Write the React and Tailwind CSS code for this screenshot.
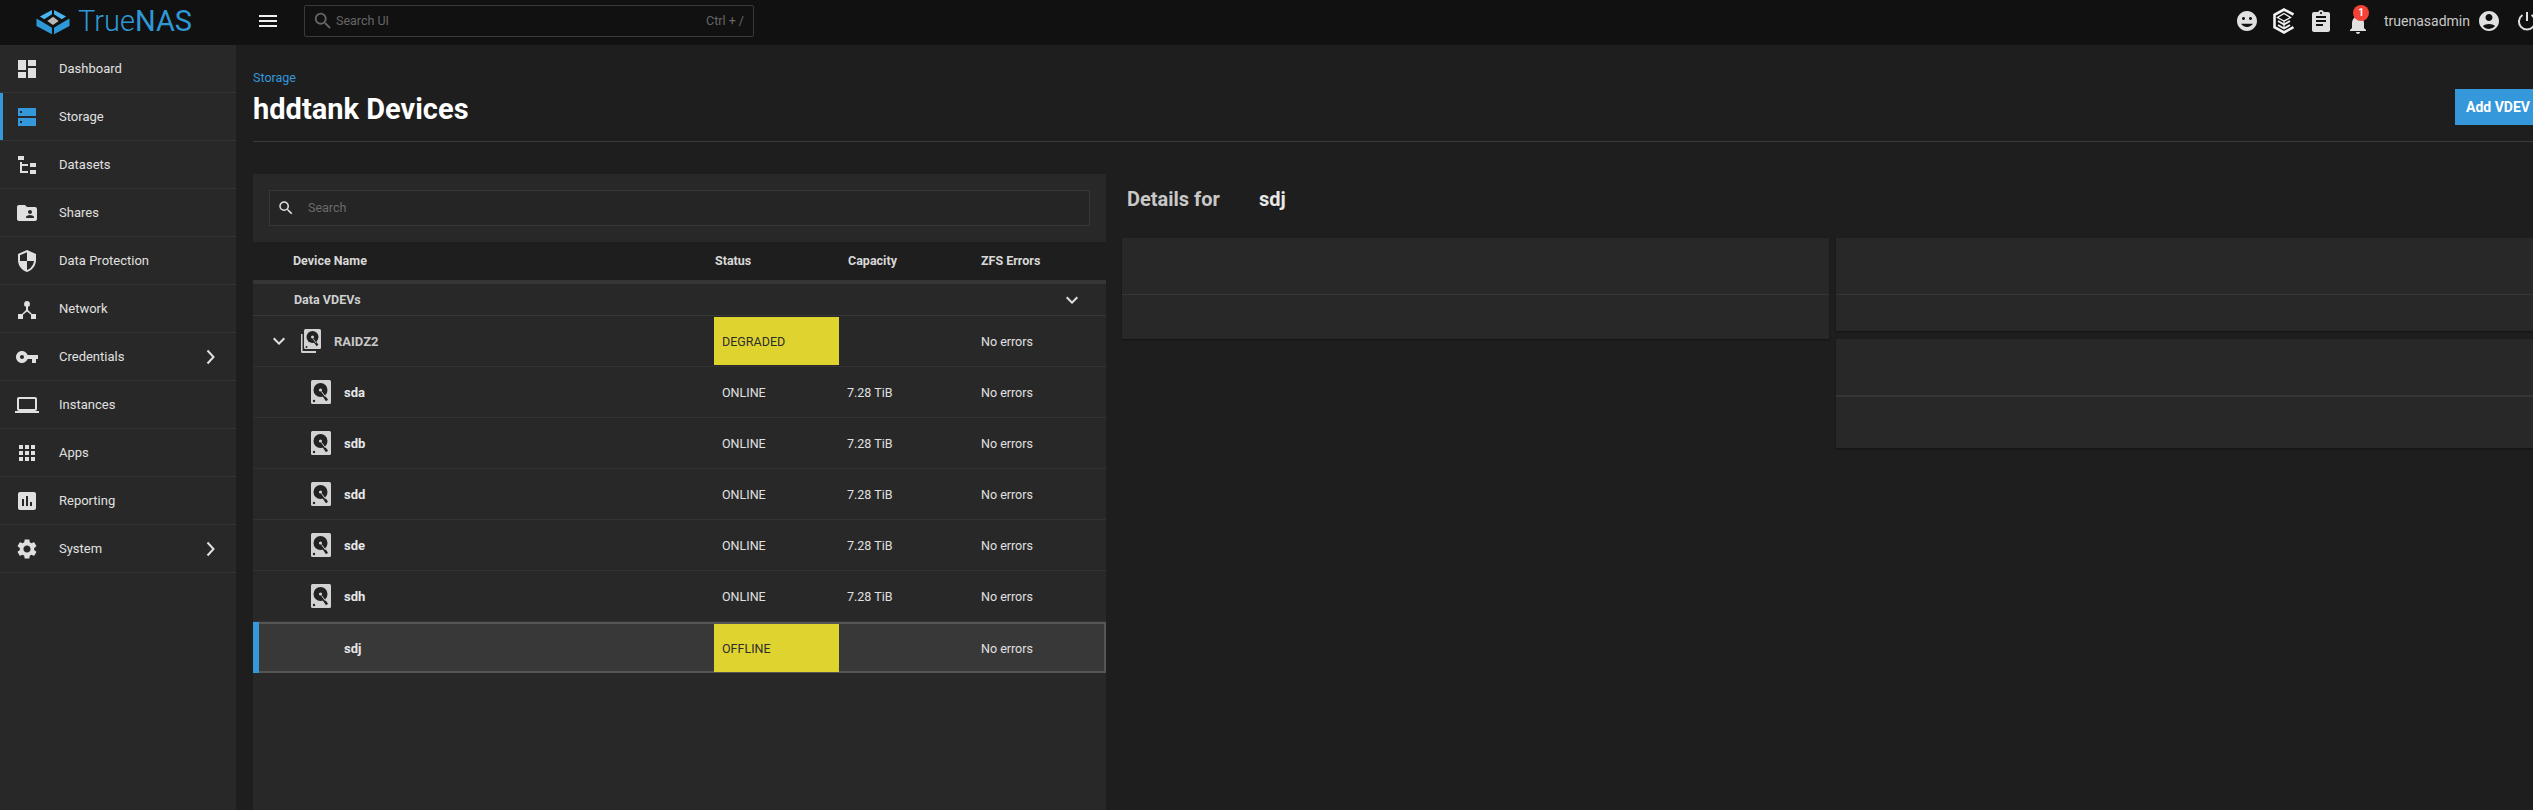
import React from "react";

function MdIcon({ d, className = "text-[#e0e0e0]", size = 24, evenodd = false }) {
  return (
    <svg width={size} height={size} viewBox="0 0 24 24" fill="currentColor" className={`shrink-0 ${className}`}>
      <path d={d} fillRule={evenodd ? "evenodd" : "nonzero"} />
    </svg>
  );
}

const ICONS = {
  dashboard: "M3 13h8V3H3v10zm0 8h8v-6H3v6zm10 0h8V11h-8v10zm0-18v6h8V3h-8z",
  datasets: "M3,3H9V7H3V3M15,10H21V14H15V10M15,17H21V21H15V17M13,13H7V18H13V20H7L5,20V9H7V11H13V13Z",
  shares: "M20 6h-8l-2-2H4c-1.1 0-1.99.9-1.99 2L2 18c0 1.1.9 2 2 2h16c1.1 0 2-.9 2-2V8c0-1.1-.9-2-2-2zm-5 3c1.1 0 2 .9 2 2s-.9 2-2 2-2-.9-2-2 .9-2 2-2zm4 8h-8v-1c0-1.33 2.67-2 4-2s4 .67 4 2v1z",
  shield: "M12 1L3 5v6c0 5.55 3.84 10.74 9 12 5.16-1.26 9-6.45 9-12V5l-9-4zm0 10.99h7c-.53 4.12-3.28 7.79-7 8.94V12H5V6.3l7-3.11v8.8z",
  network: "M12 4a3 3 0 0 1 1 5.83V13l4 4h4v5h-5v-4.200L12 14.500 8 17.800V22H3v-5h4l4-4V9.830A3 3 0 0 1 12 4z",
  key: "M12.65 10C11.83 7.67 9.61 6 7 6c-3.31 0-6 2.69-6 6s2.69 6 6 6c2.61 0 4.83-1.67 5.65-4H17v4h4v-4h2v-4H12.65zM7 14c-1.1 0-2-.9-2-2s.9-2 2-2 2 .9 2 2-.9 2-2 2z",
  laptop: "M20 18c1.1 0 1.99-.9 1.99-2L22 6c0-1.1-.9-2-2-2H4c-1.1 0-2 .9-2 2v10c0 1.1.9 2 2 2H0v2h24v-2h-4zM4 6h16v10H4V6z",
  apps: "M4 8h4V4H4v4zm6 12h4v-4h-4v4zm-6 0h4v-4H4v4zm0-6h4v-4H4v4zm6 0h4v-4h-4v4zm6-10v4h4V4h-4zm-6 4h4V4h-4v4zm6 6h4v-4h-4v4zm0 6h4v-4h-4v4z",
  reporting: "M19 3H5c-1.1 0-2 .9-2 2v14c0 1.1.9 2 2 2h14c1.1 0 2-.9 2-2V5c0-1.1-.9-2-2-2zM9 17H7v-7h2v7zm4 0h-2V7h2v10zm4 0h-2v-4h2v4z",
  gear: "M19.14 12.94c.04-.3.06-.61.06-.94 0-.32-.02-.64-.07-.94l2.03-1.58c.18-.14.23-.41.12-.61l-1.92-3.32c-.12-.22-.37-.29-.59-.22l-2.39.96c-.5-.38-1.03-.7-1.62-.94l-.36-2.54c-.04-.24-.24-.41-.48-.41h-3.84c-.24 0-.43.17-.47.41l-.36 2.54c-.59.24-1.13.57-1.62.94l-2.39-.96c-.22-.08-.47 0-.59.22L2.74 8.87c-.12.21-.08.47.12.61l2.03 1.58c-.05.3-.09.63-.09.94s.02.64.07.94l-2.03 1.58c-.18.14-.23.41-.12.61l1.92 3.32c.12.22.37.29.59.22l2.39-.96c.5.38 1.03.7 1.62.94l.36 2.54c.05.24.24.41.48.41h3.84c.24 0 .44-.17.47-.41l.36-2.54c.59-.24 1.13-.56 1.62-.94l2.39.96c.22.08.47 0 .59-.22l1.92-3.32c.12-.22.07-.47-.12-.61l-2.01-1.58zM12 15.6c-1.98 0-3.6-1.62-3.6-3.6s1.62-3.6 3.6-3.6 3.6 1.62 3.6 3.6-1.62 3.6-3.6 3.6z",
  storage: "M3 3h18v8H3zM5 6v2h2V6zM3 13h18v8H3zM5 16v2h2v-2z",
  smiley: "M11.99 2C6.47 2 2 6.48 2 12s4.47 10 9.99 10C17.52 22 22 17.52 22 12S17.52 2 11.99 2zM8.5 8c.83 0 1.5.67 1.5 1.5S9.33 11 8.5 11 7 10.33 7 9.5 7.67 8 8.5 8zm7 0c.83 0 1.5.67 1.5 1.5s-.67 1.5-1.5 1.5-1.5-.67-1.5-1.5S14.67 8 15.5 8zM12 18c-2.5 0-4.71-1.28-6-3.22h12C16.71 16.72 14.5 18 12 18z",
  clipboard: "M19 3h-4.18C14.4 1.84 13.3 1 12 1s-2.4.84-2.82 2H5c-1.1 0-2 .9-2 2v16c0 1.1.9 2 2 2h14c1.1 0 2-.9 2-2V5c0-1.1-.9-2-2-2zm-7 0c.55 0 1 .45 1 1s-.45 1-1 1-1-.45-1-1 .45-1 1-1zm2 14H7v-2h7v2zm3-4H7v-2h10v2zm0-4H7V7h10v2z",
  bell: "M12 22c1.1 0 2-.9 2-2h-4c0 1.1.9 2 2 2zm6-6v-5c0-3.07-1.63-5.64-4.5-6.32V4c0-.83-.67-1.5-1.5-1.5s-1.5.67-1.5 1.5v.68C7.64 5.36 6 7.92 6 11v5l-2 2v1h16v-1l-2-2z",
  account: "M12 2C6.48 2 2 6.48 2 12s4.48 10 10 10 10-4.48 10-10S17.52 2 12 2zm0 3c1.93 0 3.5 1.57 3.5 3.5S13.93 12 12 12s-3.5-1.57-3.5-3.5S10.07 5 12 5zm0 15c-2.49 0-4.7-1.14-6.17-2.93C7.2 15.7 9.5 15 12 15s4.8.7 6.17 2.07A7.96 7.96 0 0 1 12 20z",
  search: "M15.5 14h-.79l-.28-.27A6.47 6.47 0 0 0 16 9.5 6.5 6.5 0 1 0 9.5 16c1.61 0 3.09-.59 4.23-1.57l.27.28v.79l5 4.99L20.49 19l-4.99-5zm-6 0C7.01 14 5 11.99 5 9.5S7.01 5 9.5 5 14 7.01 14 9.5 11.99 14 9.5 14z",
  menu: "M3 18h18v-2H3v2zm0-5h18v-2H3v2zm0-7v2h18V6H3z",
  expand: "M16.59 8.59L12 13.17 7.41 8.59 6 10l6 6 6-6z",
};

const NAV = [
  ["Dashboard", "dashboard"],
  ["Storage", "storage", { active: true }],
  ["Datasets", "datasets"],
  ["Shares", "shares"],
  ["Data Protection", "shield"],
  ["Network", "network"],
  ["Credentials", "key", { arrow: true }],
  ["Instances", "laptop"],
  ["Apps", "apps"],
  ["Reporting", "reporting"],
  ["System", "gear", { arrow: true }],
];

function NavItem({ label, icon, active, arrow }) {
  return (
    <div className="h-12 shrink-0 flex items-center border-b border-[#343434] relative">
      {active && <span className="absolute left-0 top-0 bottom-0 w-[3px] bg-[#3498db]" />}
      <div className="pl-[15px] w-[59px] shrink-0 flex">
        <MdIcon d={ICONS[icon]} evenodd={icon === "storage"} className={active ? "text-[#3498db]" : "text-[#e0e0e0]"} />
      </div>
      <span className="text-[13px] text-[#e0e0e0] flex-1 leading-none">{label}</span>
      {arrow && (
        <svg width="24" height="24" viewBox="0 0 24 24" fill="none" stroke="#e0e0e0" strokeWidth="2" className="mr-[13px]">
          <path d="M8.500 5.500 14.500 12l-6 6.500" />
        </svg>
      )}
    </div>
  );
}

function Hdd() {
  return (
    <svg width="20" height="24" viewBox="0 0 20 24" className="shrink-0">
      <rect x="0" y="0" width="20" height="24" rx="1.500" fill="#d2d2d2" />
      <circle cx="9.500" cy="10" r="7" fill="#222" />
      <circle cx="9.500" cy="10" r="1.600" fill="#d2d2d2" />
      <path d="M10.500 12.500 16 20.500" stroke="#222" strokeWidth="2.500" />
      <path d="M10.500 11.500 14.500 17" stroke="#d2d2d2" strokeWidth="1" />
      <circle cx="3" cy="21" r="1.200" fill="#222" />
    </svg>
  );
}

function HddStack() {
  return (
    <svg width="20" height="24" viewBox="0 0 20 24" className="shrink-0">
      <path d="M0 5h1.500v17H15v2H1.500A1.500 1.500 0 0 1 0 22.500z" fill="#d2d2d2" />
      <rect x="3" y="0" width="17" height="20" rx="1.500" fill="#d2d2d2" />
      <circle cx="11.500" cy="8" r="6" fill="#222" />
      <circle cx="11.500" cy="8" r="1.500" fill="#d2d2d2" />
      <path d="M12 10 16.500 16.500" stroke="#222" strokeWidth="2.200" />
      <path d="M12 9.500 15 14" stroke="#d2d2d2" strokeWidth="0.800" />
      <circle cx="5.500" cy="18" r="1" fill="#222" />
    </svg>
  );
}

function GridRow({ children, className = "" }) {
  return <div className={`grid grid-cols-[461px_133px_134px_1fr] items-center ${className}`}>{children}</div>;
}

const CELL = "text-[12.500px] text-[#e0e0e0] pt-[2px]";

function DiskRow({ name }) {
  return (
    <GridRow className="h-[51px] border-b border-[#333333]">
      <div className="flex items-center pl-[58px] gap-[13px]">
        <Hdd />
        <span className="text-[13px] font-bold text-[#e8e8e8] pt-[2px]">{name}</span>
      </div>
      <span className={`${CELL} pl-[8px]`}>ONLINE</span>
      <span className={CELL}>7.28 TiB</span>
      <span className={CELL}>No errors</span>
    </GridRow>
  );
}

function StatusYellow({ children }) {
  return (
    <div className="h-[48px] bg-[#dfd42f] flex items-center w-[125px] pl-[8px] pt-[2px] text-[12.500px] text-[#2e2e2e]">{children}</div>
  );
}

function Card({ h, lineAt, thick }) {
  return (
    <div className={`bg-[#282828] shadow-[0_1px_2px_rgba(0,0,0,0.4)] flex flex-col ${h}`}>
      <div className={`${lineAt} shrink-0 ${thick ? "border-b-2" : "border-b"} border-[#363636]`} />
    </div>
  );
}

export default function App() {
  return (
    <div className="w-[2533px] h-[810px] overflow-hidden bg-[#1e1e1e] flex flex-col font-['Roboto','Liberation_Sans',sans-serif]">
      <header className="h-[45px] shrink-0 bg-[#111111] flex items-center">
        <div className="flex items-center w-[259px] pl-[36px] shrink-0 mb-[2px]">
          <svg width="34" height="26" viewBox="0 0 33 25" className="shrink-0">
            <path d="M15.500 0.800V5L8 9.800 3.800 7.200z" fill="#4ab4ee" />
            <path d="M17.500 0.800V5L25 9.800 29.200 7.200z" fill="#4ab4ee" />
            <path d="M0.500 9 6 12.200 15.500 18.200V24.500L0.500 16.500z" fill="#2e97d8" />
            <path d="M32.500 9 27 12.200 17.500 18.200V24.500L32.500 16.500z" fill="#2e97d8" />
            <path d="M16.500 7.500 22 11.500 16.500 15.500 11 11.500z" fill="#b8b8b8" />
          </svg>
          <span className="ml-[8px] text-[29px] leading-none text-[#2f98d6] font-light">
            True<span className="font-normal">NAS</span>
          </span>
        </div>
        <div className="w-[45px] shrink-0 flex mb-[3px]">
          <MdIcon d={ICONS.menu} className="text-[#f0f0f0] -ml-[3px]" />
        </div>
        <div className="w-[450px] h-[32px] mb-[3px] border border-[#3a3a3a] rounded-[2px] flex items-center px-[7px] text-[12.500px] text-[#666666]">
          <MdIcon d={ICONS.search} className="text-[#666666]" size={22} />
          <span className="ml-[2px] flex-1">Search UI</span>
          <span className="mr-[2px]">Ctrl + /</span>
        </div>
        <div className="flex-1" />
        <div className="flex items-center shrink-0 mb-[3px]">
          <MdIcon d={ICONS.smiley} className="text-[#e0e0e0]" size={24} />
          <svg width="24" height="26" viewBox="0 0 24 26" fill="none" stroke="#f2f2f2" className="ml-[13px] shrink-0">
            <path d="M21.500 6.500 12 1.500 2.500 6.800v12.400l9.500 5.300 9.500-5.300" strokeWidth="2.600" />
            <path d="M12 5.500 18.500 9.500 12 13 5.500 9.500z" strokeWidth="1.400" />
            <path d="M6 13 12 16.500 18 13" strokeWidth="1.800" />
            <path d="M6 17 12 20.500 18 17" strokeWidth="1.800" />
            <path d="M12 13v7.500" strokeWidth="1.200" />
          </svg>
          <MdIcon d={ICONS.clipboard} className="text-[#e0e0e0] ml-[13px]" size={24} />
          <div className="relative ml-[13px] w-[24px] h-[24px] mt-[5px]">
            <MdIcon d={ICONS.bell} className="text-[#e0e0e0]" size={24} />
            <span className="absolute -top-[7px] left-[7px] w-[16px] h-[16px] rounded-full bg-[#f44336] text-white text-[10px] font-bold flex items-center justify-center">1</span>
          </div>
          <span className="ml-[14px] text-[14px] text-[#c8c8c8]">truenasadmin</span>
          <MdIcon d={ICONS.account} className="text-[#e0e0e0] ml-[7px]" size={24} />
          <svg width="24" height="24" viewBox="0 0 24 24" fill="none" stroke="#e0e0e0" strokeWidth="2" className="ml-[14px] -mr-[6px] shrink-0">
            <path d="M12 3v9" />
            <path d="M7.500 6A8 8 0 1 0 16.500 6" />
          </svg>
        </div>
      </header>

      <div className="flex flex-1 min-h-0">
        <aside className="w-[236px] shrink-0 bg-[#282828] flex flex-col">
          {NAV.map(([label, icon, opts]) => (
            <NavItem key={label} label={label} icon={icon} {...opts} />
          ))}
        </aside>

        <main className="flex-1 min-w-0 pl-[17px] flex flex-col">
          <div className="h-[97px] shrink-0 border-b border-[#3a3a3a] flex items-end justify-between pb-[16px]">
            <div className="flex flex-col">
              <span className="text-[12.500px] leading-[16px] text-[#3498db] mb-[7px]">Storage</span>
              <h1 className="text-[29px] leading-[32px] font-bold text-white">hddtank Devices</h1>
            </div>
            <button className="h-[36px] w-[78px] bg-[#3498db] text-white text-[14px] font-bold text-left pl-[11px] whitespace-nowrap overflow-hidden">Add VDEV</button>
          </div>

          <div className="flex-1 min-h-0 pt-[32px] flex gap-[16px]">
            <section className="w-[853px] shrink-0 flex flex-col">
              <div className="h-[68px] shrink-0 bg-[#282828] flex items-center px-[16px]">
                <div className="w-full h-[36px] border border-[#383838] bg-[#252525] flex items-center pl-[7px] gap-[13px]">
                  <MdIcon d={ICONS.search} className="text-[#e0e0e0]" size={18} />
                  <span className="text-[12.500px] text-[#6a6a6a]">Search</span>
                </div>
              </div>
              <GridRow className="h-[38px] shrink-0 border-b-4 border-[#363636] box-content text-[12.500px] font-bold text-[#d8d8d8]">
                <span className="pl-[40px]">Device Name</span>
                <span className="pl-[1px]">Status</span>
                <span className="pl-[1px]">Capacity</span>
                <span>ZFS Errors</span>
              </GridRow>
              <div className="flex-1 bg-[#282828] flex flex-col">
                <div className="h-[32px] shrink-0 border-b border-[#363636] flex items-center pl-[41px] pr-[22px] justify-between">
                  <span className="text-[12.500px] pt-[1px] font-bold text-[#d0d0d0]">Data VDEVs</span>
                  <MdIcon d={ICONS.expand} className="text-[#e0e0e0]" size={24} />
                </div>
                <GridRow className="h-[51px] border-b border-[#333333]">
                  <div className="flex items-center pl-[14px]">
                    <MdIcon d={ICONS.expand} className="text-[#e0e0e0]" size={24} />
                    <span className="ml-[10px]"><HddStack /></span>
                    <span className="ml-[13px] pt-[2px] text-[13px] font-bold text-[#c8c8c8]">RAIDZ2</span>
                  </div>
                  <StatusYellow>DEGRADED</StatusYellow>
                  <span />
                  <span className={CELL}>No errors</span>
                </GridRow>
                {["sda", "sdb", "sdd", "sde", "sdh"].map((n) => (
                  <DiskRow key={n} name={n} />
                ))}
                <GridRow className="h-[51px] bg-[#383838] border-y-2 border-r-2 border-[#555555] relative">
                  <span className="absolute left-0 -top-[2px] -bottom-[2px] w-[6px] bg-[#3498db]" />
                  <span className="pl-[91px] pt-[2px] text-[13px] font-bold text-[#e8e8e8]">sdj</span>
                  <StatusYellow>OFFLINE</StatusYellow>
                  <span />
                  <span className={CELL}>No errors</span>
                </GridRow>
              </div>
            </section>

            <section className="flex-1 min-w-0 flex flex-col">
              <div className="h-[64px] shrink-0 flex items-start pt-[13px] pl-[5px] text-[20px] leading-[24px] font-bold">
                <span className="w-[132px] text-[#c8c8c8]">Details for</span>
                <span className="text-[#e8e8e8]">sdj</span>
              </div>
              <div className="grid grid-cols-[707px_1fr] gap-x-[7px] items-start">
                <Card h="h-[101px]" lineAt="h-[57px]" />
                <div className="flex flex-col gap-[8px]">
                  <Card h="h-[93px]" lineAt="h-[57px]" />
                  <Card h="h-[109px]" lineAt="h-[58px]" thick />
                </div>
              </div>
            </section>
          </div>
        </main>
      </div>
    </div>
  );
}
